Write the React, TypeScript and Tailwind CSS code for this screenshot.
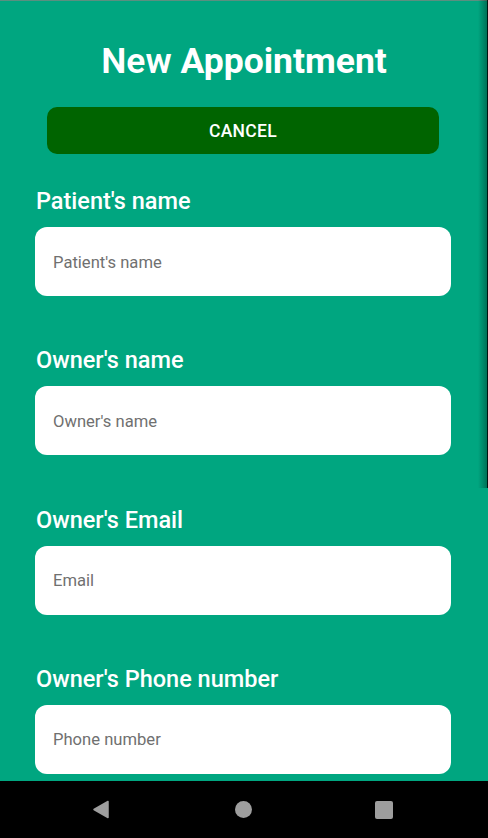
import React from "react";

const fields = [
  { label: "Patient's name", placeholder: "Patient's name" },
  { label: "Owner's name", placeholder: "Owner's name" },
  { label: "Owner's Email", placeholder: "Email" },
  { label: "Owner's Phone number", placeholder: "Phone number" },
];

export default function App() {
  return (
    <div
      className="relative flex h-[838px] w-[488px] flex-col overflow-hidden bg-[#00a680]"
      style={{ fontFamily: "Roboto, 'Noto Sans', sans-serif" }}
    >
      <div className="h-[1px] w-full bg-[#5b8f80]" />
      <main className="flex-1 overflow-hidden">
        <h1 className="mt-[39px] h-[42px] text-center text-[35.5px] leading-[42px] text-white">
          <span className="font-[600]">New</span>{" "}
          <span className="font-bold">Appointment</span>
        </h1>
        <div className="mx-[47px] mt-[25px] flex h-[47px] w-[392px] items-center justify-center rounded-[10px] bg-[#006400] pt-[2px]">
          <span className="text-[17.5px] font-[500] tracking-[0.3px] text-white">CANCEL</span>
        </div>
        <div className="mt-[33px] flex flex-col gap-[50.3px] pl-[35px] pr-[37px]">
          {fields.map((f) => (
            <div key={f.label} className="flex flex-col">
              <label className="ml-[1px] h-[28px] text-[23.5px] font-[500] leading-[28px] text-white">
                {f.label}
              </label>
              <div className="mt-[12px] flex h-[69px] items-center rounded-[12px] bg-white px-[18px] pt-[3px]">
                <input
                  placeholder={f.placeholder}
                  className="w-full bg-transparent text-[16.6px] text-[#333] outline-none placeholder:text-[#707070]"
                  style={{ fontFamily: "Roboto, sans-serif" }}
                />
              </div>
            </div>
          ))}
        </div>
      </main>
      <nav className="flex h-[57px] items-center bg-black">
        <div className="flex flex-1 justify-center pr-[2px]">
          <svg width="18" height="19" viewBox="0 0 18 19">
            <path d="M16 1.5 L2 9.5 L16 17.5 Z" fill="#9e9e9e" stroke="#9e9e9e" strokeWidth="1.5" strokeLinejoin="round" />
          </svg>
        </div>
        <div className="flex w-[80px] justify-center">
          <div className="h-[17px] w-[17px] rounded-full bg-[#9e9e9e]" />
        </div>
        <div className="flex flex-1 justify-center pr-[4px]">
          <div className="h-[18px] w-[18px] rounded-[2px] bg-[#9e9e9e]" />
        </div>
      </nav>
      <div className="pointer-events-none absolute right-0 top-0 h-[488px] w-[10px] bg-gradient-to-r from-transparent to-black/35" />
      <div className="pointer-events-none absolute right-0 top-0 h-[488px] w-[1px] bg-black/80" />
    </div>
  );
}
